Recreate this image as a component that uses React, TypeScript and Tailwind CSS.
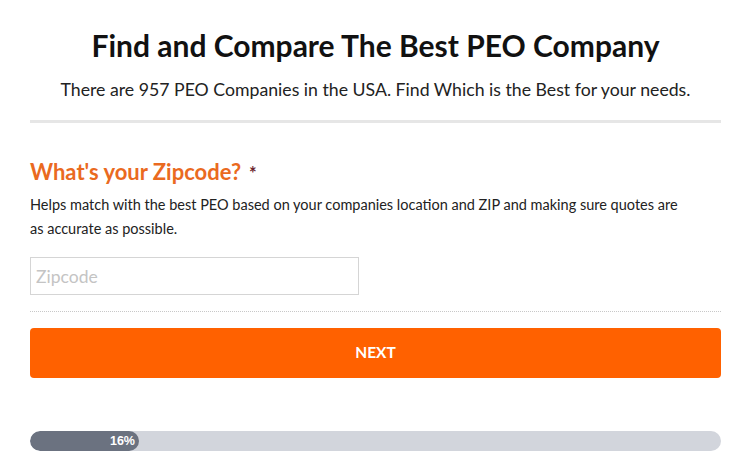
export default function App() {
  return (
    <div className="min-h-[476px] w-[751px] bg-white px-[30px] pt-[27px] font-['Lato',sans-serif] text-[#111]">
      <h1 className="text-center text-[30px] font-bold leading-[36px] text-[#111]">
        Find and Compare The Best PEO Company
      </h1>
      <p className="mt-[15px] text-center text-[17.7px] leading-[24px] text-[#222]">
        There are 957 PEO Companies in the USA. Find Which is the Best for your needs.
      </p>
      <div className="mt-[18px] h-[3px] bg-[#e6e6e6]" />

      <h2 className="mt-[35px] text-[22px] font-bold leading-[28px] text-[#ea6a1f]">
        What's your Zipcode?<span className="ml-[8px] text-[18px] text-[#6b1f2f]">*</span>
      </h2>
      <p className="mt-[6px] w-[650px] text-[14.5px] leading-[24px] text-[#222]">
        Helps match with the best PEO based on your companies location and ZIP and making sure quotes are as accurate as possible.
      </p>
      <input
        placeholder="Zipcode"
        className="mt-[16px] block h-[38px] w-[329px] border border-[#d5d5d5] bg-white px-[5px] text-[17.5px] text-[#333] outline-none placeholder:text-[#c4c4c4]"
      />
      <div className="mt-[16px] border-t border-dotted border-[#c8c8c8]" />
      <button className="mt-[16px] flex h-[50px] w-full items-center justify-center rounded-[4px] bg-[#ff6100] text-[15.5px] font-bold text-white">
        NEXT
      </button>

      <div className="mt-[53px] h-[20px] w-full overflow-hidden rounded-full bg-[#d2d5dc]">
        <div className="flex h-full w-[109px] items-center justify-end rounded-full bg-[#6b7280] pr-[4px] font-['Liberation_Sans',sans-serif] text-[12.5px] font-bold text-white">
          16%
        </div>
      </div>
    </div>
  );
}
